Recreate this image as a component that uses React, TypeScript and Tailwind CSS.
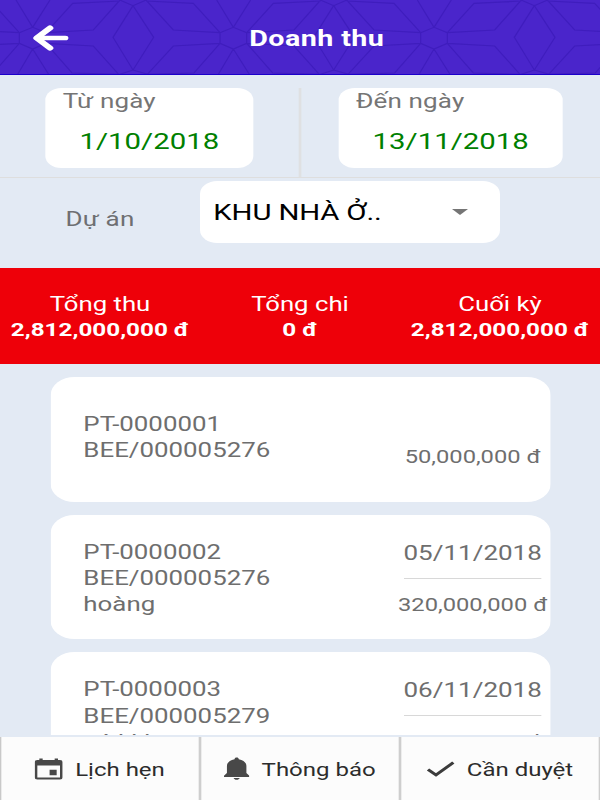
import type { ReactNode } from 'react';

interface Receipt {
  code: string;
  contract: string;
  customer?: string;
  date?: string;
  amount: string;
}

const receipts: Receipt[] = [
  { code: 'PT-0000001', contract: 'BEE/000005276', amount: '50,000,000 đ' },
  { code: 'PT-0000002', contract: 'BEE/000005276', customer: 'hoàng', date: '05/11/2018', amount: '320,000,000 đ' },
  { code: 'PT-0000003', contract: 'BEE/000005279', customer: 'có kkk', date: '06/11/2018', amount: '50,000,000 đ' },
];

const totals = [
  { label: 'Tổng thu', value: '2,812,000,000 đ' },
  { label: 'Tổng chi', value: '0 đ' },
  { label: 'Cuối kỳ', value: '2,812,000,000 đ' },
];

// One repeat of the header ornament: a flower hexagon with its petals and the diamond next to it.
const ornament =
  'M-40 98L0 82L40 98V130L0 147L-40 130Z M0 82L-50 0M0 82L52 0M0 147L-45 223M0 147L48 223' +
  'M40 98L182 90L262 0M40 98L120 10L262 3M40 130L182 138L258 223M40 130L118 219L258 223' +
  'M-40 98L-180 90L-262 0M-40 98L-120 10L-262 3M-40 130L-180 138L-258 223M-40 130L-118 219L-258 223' +
  'M301 17L241 112L301 210L363 112ZM261 0L301 17L341 0M261 223L301 210L346 223';

function Header() {
  return (
    <header className="relative h-[75px] shrink-0 overflow-hidden border-b border-[#1c00cb] bg-[#4a25cb]">
      <svg className="absolute inset-0 h-[75px] w-[450px]" viewBox="0 0 1800 225" preserveAspectRatio="none">
        {[98, 700, 1302, 1904].map((x) => (
          <path key={x} d={ornament} transform={`translate(${x} 0)`} fill="none" stroke="#3f1dbd" strokeWidth="3.5" />
        ))}
      </svg>
      <div className="relative flex h-[75px] items-center pl-[24px]">
        <svg className="h-[26px] w-[28px]" viewBox="0 0 28 26" fill="none" stroke="#fff" strokeLinecap="round">
          <path d="M13.500 3L3.500 13L13.500 23" strokeWidth="5" strokeLinejoin="round" />
          <path d="M4 13H25" strokeWidth="4.6" />
        </svg>
        <h1 className="ml-[135px] pt-[2px] text-[21.500px] leading-[26px] font-bold tracking-[0.3px] text-white">Doanh thu</h1>
      </div>
    </header>
  );
}

function DateField({ label, value, className }: { label: string; value: string; className: string }) {
  return (
    <div className={`h-[80px] rounded-[12px] bg-white ${className}`}>
      <div className="pt-px pl-[13px] text-[19.5px] leading-[26px] tracking-[0.1px] text-[#757575]">{label}</div>
      <div className="mt-[14px] text-center text-[22px] leading-[26px] text-[#008000]">{value}</div>
    </div>
  );
}

function ReceiptCard({ receipt }: { receipt: Receipt }) {
  return (
    <div className="flex h-[124.5px] shrink-0 items-center justify-between rounded-[18px] bg-white pl-[25px] text-[#6e6e6e]">
      <div className={`text-[19.4px] leading-[26.3px] ${receipt.customer ? 'pt-[5px]' : 'pb-[2px]'}`}>
        <div>{receipt.code}</div>
        <div>{receipt.contract}</div>
        {receipt.customer && <div>{receipt.customer}</div>}
      </div>
      {receipt.date ? (
        <div className="flex w-[116px] flex-col items-center pt-[4px]">
          <div className="h-[39px] border-b border-[#d8d8d8] pt-px text-[19.5px] leading-[26px]">{receipt.date}</div>
          <div className="pt-[13px] text-[17.8px] leading-[26px] whitespace-nowrap">{receipt.amount}</div>
        </div>
      ) : (
        <div className="w-[116px] pt-[36px] text-center text-[17.8px] leading-[26px] whitespace-nowrap">{receipt.amount}</div>
      )}
    </div>
  );
}

function Tab({ icon, label }: { icon: ReactNode; label: string }) {
  return (
    <button
      type="button"
      className="flex flex-1 items-center justify-center border-r-2 border-[#cecece] text-[18px] text-[#2c2c2c] last:border-r"
    >
      {icon}
      <span className="ml-[9px] pt-[2px]">{label}</span>
    </button>
  );
}

const CalendarIcon = (
  <svg className="h-[22px] w-[21px]" viewBox="0 0 21 22">
    <path
      d="M3.500 0.500h2.500v1.500h9v-1.500h2.500v1.500h1.500a2 2 0 0 1 2 2v15.500a2 2 0 0 1-2 2h-17a2 2 0 0 1-2-2v-15.500a2 2 0 0 1 2-2h1.500zM2 7.500v12h17v-12z"
      fill="#484848"
      fillRule="evenodd"
    />
    <path d="M11.200 11.800h5.300v5.400h-5.300z" fill="#484848" />
  </svg>
);

const BellIcon = (
  <svg className="h-[23px] w-[19px]" viewBox="0 0 19 23">
    <path
      d="M9.500 0.500c1 0 1.500 0.700 1.600 1.700c3.600 0.800 5.700 3.500 5.700 6.800v7l2.200 2.800v1.200h-19v-1.200l2.200-2.800v-7c0-3.300 2.100-6 5.700-6.800c0.100-1 0.600-1.700 1.600-1.700zM7.200 21h4.600c-0.300 1.100-1.200 1.800-2.300 1.800s-2-0.700-2.300-1.800z"
      fill="#484848"
    />
  </svg>
);

const CheckIcon = (
  <svg className="h-[16px] w-[21px]" viewBox="0 0 21 16">
    <path d="M1 8.500L7 14L20 1.500" fill="none" stroke="#3c3c3c" strokeWidth="2.600" />
  </svg>
);

export default function App() {
  return (
    <div className="h-[800px] w-[600px] overflow-hidden">
      {/* A 450px wide layout, widened to fill the display */}
      <div className="flex h-[800px] w-[450px] origin-top-left scale-x-[1.33333] flex-col bg-[#e3eaf4] font-[Roboto,sans-serif]">
        <Header />

        <section className="flex h-[103px] shrink-0 border-b border-[#dedede] pt-[13px]">
          <div className="flex w-[226px] border-r-2 border-[#dfe0e2] pl-[34px]">
            <DateField label="Từ ngày" value="1/10/2018" className="w-[156px]" />
          </div>
          <DateField label="Đến ngày" value="13/11/2018" className="ml-[28px] w-[168px]" />
        </section>

        <section className="flex h-[90px] shrink-0 items-start pt-[2.500px]">
          <div className="w-[150px] pt-[26px] text-center text-[19.5px] leading-[26px] tracking-[0.1px] text-[#6e6f72]">Dự án</div>
          <div className="flex h-[62px] w-[225px] items-center justify-between rounded-[13px] bg-white pr-[24px] pl-[10px] text-[22px] text-black">
            <span className="pt-[2px] tracking-[-0.1px]">KHU NHÀ Ở..</span>
            <svg className="h-[6px] w-[12px]" viewBox="0 0 12 6">
              <path d="M0 0h12l-6 6z" fill="#757575" />
            </svg>
          </div>
        </section>

        <section className="grid h-[96px] shrink-0 grid-cols-3 bg-[#ee0009] pt-[24px] text-center text-white">
          {totals.map((total) => (
            <div key={total.label}>
              <div className="text-[19.3px] leading-[26px]">{total.label}</div>
              <div className="text-[18.2px] leading-[24px] font-bold">{total.value}</div>
            </div>
          ))}
        </section>

        <main className="mx-[37.500px] flex h-[371px] shrink-0 flex-col gap-[13px] overflow-hidden pt-[13px]">
          {receipts.map((receipt) => (
            <ReceiptCard key={receipt.code} receipt={receipt} />
          ))}
        </main>

        <nav className="mt-[2px] flex flex-1 border-l border-[#c9c9c9] bg-[#fcfcfc]">
          <Tab icon={CalendarIcon} label="Lịch hẹn" />
          <Tab icon={BellIcon} label="Thông báo" />
          <Tab icon={CheckIcon} label="Cần duyệt" />
        </nav>
      </div>
    </div>
  );
}
